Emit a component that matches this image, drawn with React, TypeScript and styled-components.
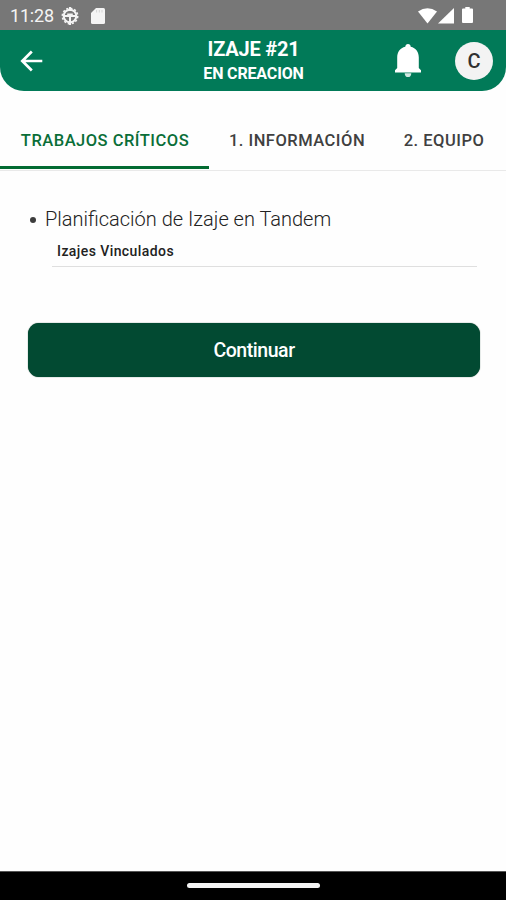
import React from "react";
import styled, { createGlobalStyle } from "styled-components";

const GlobalStyle = createGlobalStyle`
  * { box-sizing: border-box; }
  body { margin: 0; background: #fff; }
`;

const Screen = styled.div`
  width: 506px;
  height: 900px;
  display: flex;
  flex-direction: column;
  background: #fefefe;
  font-family: Roboto, sans-serif;
  overflow: hidden;
`;

const StatusBar = styled.div`
  height: 30px;
  flex: none;
  display: flex;
  align-items: center;
  justify-content: space-between;
  padding: 1px 33px 0 10px;
  background: #777777;
  color: #f4f4f4;
`;

const StatusGroup = styled.div<{ $gap: number }>`
  display: flex;
  align-items: center;
  gap: ${(p) => p.$gap}px;
  svg { display: block; }
`;

const Clock = styled.span`
  width: 44px;
  padding-top: 1px;
  font-size: 18px;
  line-height: 20px;
  letter-spacing: -0.2px;
  white-space: nowrap;
`;

const Header = styled.header`
  height: 61px;
  flex: none;
  display: grid;
  grid-template-columns: 130px 1fr 130px;
  align-items: center;
  background: #017a58;
  border-radius: 0 0 24px 24px;
  color: #fff;
`;

const IconButton = styled.button`
  display: block;
  padding: 0;
  border: 0;
  background: none;
  color: #fff;
  svg { display: block; }
`;

const HeaderStart = styled.div`
  padding-left: 20px;
`;

const HeaderEnd = styled.div`
  display: flex;
  align-items: center;
  justify-content: flex-end;
  gap: 34px;
  padding-right: 13px;
`;

const Avatar = styled.div`
  width: 38px;
  height: 38px;
  border-radius: 50%;
  background: #f3f3f3;
  color: #303030;
  font-size: 20px;
  line-height: 38px;
  font-weight: 500;
  text-align: center;
`;

const Titles = styled.div`
  padding-left: 1px;
  text-align: center;
  white-space: nowrap;
`;

const Title = styled.h1`
  margin: 0;
  font-size: 20px;
  line-height: 25px;
  font-weight: 700;
  letter-spacing: -0.2px;
`;

const Subtitle = styled.div`
  margin-top: 1px;
  font-size: 16px;
  line-height: 22px;
  font-weight: 700;
  letter-spacing: -0.15px;
`;

const Tabs = styled.nav`
  height: 80px;
  flex: none;
  display: flex;
  border-bottom: 1px solid #e9e9e9;
`;

const Tab = styled.button<{ $width: number; $active?: boolean }>`
  width: ${(p) => p.$width}px;
  height: 78px;
  flex: none;
  padding: 24px 0 0 1px;
  border: 0;
  border-bottom: 3px solid ${(p) => (p.$active ? "#036b32" : "transparent")};
  background: none;
  color: ${(p) => (p.$active ? "#0a6e38" : "#404040")};
  font: 500 16.5px/20px Roboto, sans-serif;
  letter-spacing: 0.5px;
  white-space: nowrap;
`;

const Content = styled.main`
  flex: 1;
  padding: 35px 26px 0 28px;
`;

const Item = styled.div`
  display: flex;
  align-items: center;
  height: 26px;
  padding-left: 2px;
  color: #222;
  font-size: 20px;
  font-weight: 300;
  white-space: nowrap;
`;

const Bullet = styled.span`
  width: 6px;
  height: 6px;
  margin: 2px 9px 0 0;
  border-radius: 50%;
  background: #3c3c3c;
`;

const Field = styled.div`
  height: 35px;
  margin: 0 3px 0 24px;
  padding: 9px 0 0 5px;
  border-bottom: 1px solid #dfdfdf;
  color: #222;
  font-size: 14px;
  line-height: 20px;
  font-weight: 500;
  letter-spacing: 0.42px;
`;

const PrimaryButton = styled.button`
  display: block;
  width: 452px;
  height: 54px;
  margin-top: 56px;
  padding: 1px 0 0;
  border: 0;
  border-radius: 11px;
  background: #024a32;
  box-shadow: 0 0 1px #123c2a;
  color: #fff;
  font: 500 19.5px/53px Roboto, sans-serif;
  letter-spacing: -0.45px;
`;

const NavBar = styled.footer`
  height: 29px;
  flex: none;
  display: flex;
  justify-content: center;
  align-items: center;
  padding: 0 0 1px 1px;
  background: #000;
  border-top: 1px solid #555;
`;

const HomeHandle = styled.div`
  width: 133px;
  height: 5px;
  border-radius: 2.5px;
  background: #f4f4f4;
`;

const DebugIcon = () => (
  <svg width="18" height="20" viewBox="0 0 18 20" fill="none" stroke="#f4f4f4">
    <circle cx="9" cy="10" r="7.7" strokeWidth="1.6" strokeDasharray="2.2 1.83" />
    <circle cx="9" cy="10" r="6.3" strokeWidth="2" />
    <path d="M3 10h12M9 10v9M9 1v4" strokeWidth="2" />
    <path d="M6.200 7.500h5.600v3.500H6.200z" fill="#f4f4f4" stroke="none" />
  </svg>
);

const CardIcon = () => (
  <svg width="14" height="16" viewBox="0 0 14 16">
    <path d="M5 0h7.500Q14 0 14 1.500v13q0 1.500-1.500 1.500h-11Q0 16 0 14.500V5z" fill="#f4f4f4" />
    <path d="M5.600 2v2.500M8.300 2v2.500M11 2v2.500" stroke="#d4d4d4" strokeWidth="1" />
  </svg>
);

const WifiIcon = () => (
  <svg width="19" height="16" viewBox="0 0 19 16">
    <path d="M0 3.500Q9.500-3 19 3.500L9.500 15.500z" fill="#fff" />
  </svg>
);

const SignalIcon = () => (
  <svg width="16" height="16" viewBox="0 0 16 16">
    <path d="M16 0v15.500H0z" fill="#fff" />
  </svg>
);

const BatteryIcon = () => (
  <svg width="11" height="17" viewBox="0 0 11 17">
    <path d="M3.300 0h4.400v1.500H10q1 0 1 1v12.500q0 1-1 1H1q-1 0-1-1V2.500q0-1 1-1h2.300z" fill="#fff" />
  </svg>
);

const BackIcon = () => (
  <svg width="23" height="22" viewBox="0 0 23 22" fill="none" stroke="currentColor" strokeWidth="2.700">
    <path d="M22.300 11H3M11.800 1.500L2.300 11l9.500 9.500" />
  </svg>
);

const BellIcon = () => (
  <svg width="26" height="34" viewBox="0 0 26 34" fill="currentColor">
    <path d="M13 0q2.500 0 2.700 2.800C21 4 23.800 8.300 23.800 13.500V24l2.200 2.200V28.500H0v-2.300L2.200 24V13.500C2.200 8.300 5 4 10.300 2.800 10.500 0 13 0 13 0z" />
    <path d="M9.700 29.200h6.600q-.3 3.900-3.300 3.900t-3.300-3.900z" fillOpacity=".82" />
  </svg>
);

export default function App() {
  return (
    <>
      <GlobalStyle />
      <Screen>
        <StatusBar>
          <StatusGroup $gap={12}>
            <StatusGroup $gap={7}>
              <Clock>11:28</Clock>
              <DebugIcon />
            </StatusGroup>
            <CardIcon />
          </StatusGroup>
          <StatusGroup $gap={1}>
            <WifiIcon />
            <StatusGroup $gap={8}>
              <SignalIcon />
              <BatteryIcon />
            </StatusGroup>
          </StatusGroup>
        </StatusBar>
        <Header>
          <HeaderStart>
            <IconButton aria-label="Volver">
              <BackIcon />
            </IconButton>
          </HeaderStart>
          <Titles>
            <Title>IZAJE #21</Title>
            <Subtitle>EN CREACION</Subtitle>
          </Titles>
          <HeaderEnd>
            <IconButton aria-label="Notificaciones">
              <BellIcon />
            </IconButton>
            <Avatar>C</Avatar>
          </HeaderEnd>
        </Header>
        <Tabs>
          <Tab $width={209} $active>TRABAJOS CRÍTICOS</Tab>
          <Tab $width={175}>1. INFORMACIÓN</Tab>
          <Tab $width={119}>2. EQUIPO</Tab>
        </Tabs>
        <Content>
          <Item>
            <Bullet />
            Planificación de Izaje en Tandem
          </Item>
          <Field>Izajes Vinculados</Field>
          <PrimaryButton>Continuar</PrimaryButton>
        </Content>
        <NavBar>
          <HomeHandle />
        </NavBar>
      </Screen>
    </>
  );
}
